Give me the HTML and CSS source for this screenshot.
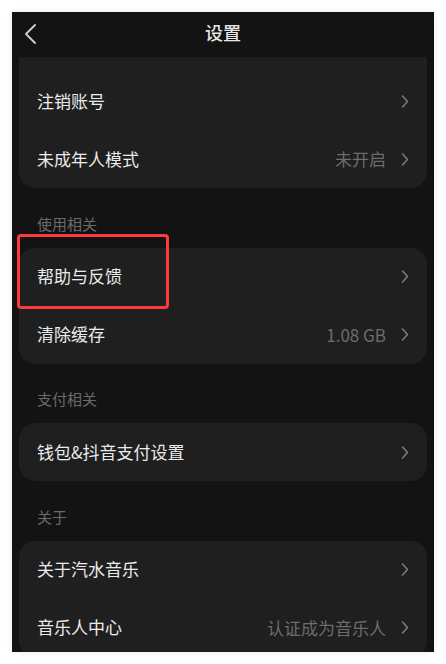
FILE: index.html
```html
<!DOCTYPE html>
<html lang="zh-CN">
<head>
<meta charset="utf-8">
<title>设置</title>
<link rel="stylesheet" href="styles.css">
</head>
<body>
<div class="frame">
  <header class="header">
    <div class="back">
      <svg width="12" height="20" viewBox="0 0 12 20"><path d="M11 1 L2 10 L11 19" fill="none" stroke="#cfcfcf" stroke-width="1.8" stroke-linecap="round" stroke-linejoin="round"/></svg>
    </div>
    <div class="title">设置</div>
    <div></div>
  </header>
  <main class="content">
    <div class="card card-first">
      <div class="row"><span class="label">注销账号</span><span class="right"><svg class="chev" width="8" height="13" viewBox="0 0 8 13"><path d="M1.5 1 L6.5 6.5 L1.5 12" fill="none" stroke="#7a7a7a" stroke-width="1.6" stroke-linecap="round" stroke-linejoin="round"/></svg></span></div>
      <div class="row"><span class="label">未成年人模式</span><span class="right"><span class="value">未开启</span><svg class="chev" width="8" height="13" viewBox="0 0 8 13"><path d="M1.5 1 L6.5 6.5 L1.5 12" fill="none" stroke="#7a7a7a" stroke-width="1.6" stroke-linecap="round" stroke-linejoin="round"/></svg></span></div>
    </div>
    <div class="section">使用相关</div>
    <div class="card">
      <div class="row row-marked"><span class="label">帮助与反馈</span><span class="right"><svg class="chev" width="8" height="13" viewBox="0 0 8 13"><path d="M1.5 1 L6.5 6.5 L1.5 12" fill="none" stroke="#7a7a7a" stroke-width="1.6" stroke-linecap="round" stroke-linejoin="round"/></svg></span><div class="highlight"></div></div>
      <div class="row"><span class="label">清除缓存</span><span class="right"><span class="value">1.08 GB</span><svg class="chev" width="8" height="13" viewBox="0 0 8 13"><path d="M1.5 1 L6.5 6.5 L1.5 12" fill="none" stroke="#7a7a7a" stroke-width="1.6" stroke-linecap="round" stroke-linejoin="round"/></svg></span></div>
    </div>
    <div class="section">支付相关</div>
    <div class="card">
      <div class="row"><span class="label">钱包&amp;抖音支付设置</span><span class="right"><svg class="chev" width="8" height="13" viewBox="0 0 8 13"><path d="M1.5 1 L6.5 6.5 L1.5 12" fill="none" stroke="#7a7a7a" stroke-width="1.6" stroke-linecap="round" stroke-linejoin="round"/></svg></span></div>
    </div>
    <div class="section">关于</div>
    <div class="card">
      <div class="row"><span class="label">关于汽水音乐</span><span class="right"><svg class="chev" width="8" height="13" viewBox="0 0 8 13"><path d="M1.5 1 L6.5 6.5 L1.5 12" fill="none" stroke="#7a7a7a" stroke-width="1.6" stroke-linecap="round" stroke-linejoin="round"/></svg></span></div>
      <div class="row"><span class="label">音乐人中心</span><span class="right"><span class="value">认证成为音乐人</span><svg class="chev" width="8" height="13" viewBox="0 0 8 13"><path d="M1.5 1 L6.5 6.5 L1.5 12" fill="none" stroke="#7a7a7a" stroke-width="1.6" stroke-linecap="round" stroke-linejoin="round"/></svg></span></div>
    </div>
  </main>
</div>
</body>
</html>
```
FILE: styles.css
```css
html, body {
  margin: 0;
  padding: 0;
  background: #ffffff;
}
body {
  font-family: "Noto Sans CJK SC", "Noto Sans", sans-serif;
}
.frame {
  margin: 12px;
  width: 422px;
  height: 640px;
  background: #131313;
  overflow: hidden;
  box-shadow: 0 0 8px rgba(0, 0, 0, 0.08);
}
.header {
  height: 45px;
  display: grid;
  grid-template-columns: 1fr auto 1fr;
  align-items: center;
}
.back {
  padding-left: 12px;
  padding-bottom: 2px;
  display: flex;
  align-items: center;
}
.title {
  color: #e6e6e6;
  font-size: 18px;
  font-weight: 500;
  line-height: 24px;
  padding-bottom: 5px;
}
.content {
  padding: 0 7px;
}
.card {
  background: #1f1f1f;
  border-radius: 16px;
}
.card-first {
  border-radius: 0 0 16px 16px;
  padding-top: 15px;
}
.row {
  position: relative;
  height: 58px;
  display: flex;
  align-items: center;
  justify-content: space-between;
  padding: 0 18px;
}
.label {
  color: #ebebeb;
  font-size: 17px;
  font-weight: 400;
  line-height: 24px;
  padding-bottom: 1px;
}
.right {
  display: flex;
  align-items: center;
  gap: 15px;
}
.value {
  color: #6c6c6c;
  font-size: 17px;
  line-height: 24px;
}
.chev {
  display: block;
}
.section {
  padding: 25.5px 0 14px 18px;
  font-size: 15px;
  line-height: 20px;
  color: #6a6a6a;
}
.highlight {
  position: absolute;
  left: -2px;
  top: -14px;
  width: 152px;
  height: 75px;
  box-sizing: border-box;
  border: 3px solid #fb3b3b;
  border-radius: 4px;
}
```
